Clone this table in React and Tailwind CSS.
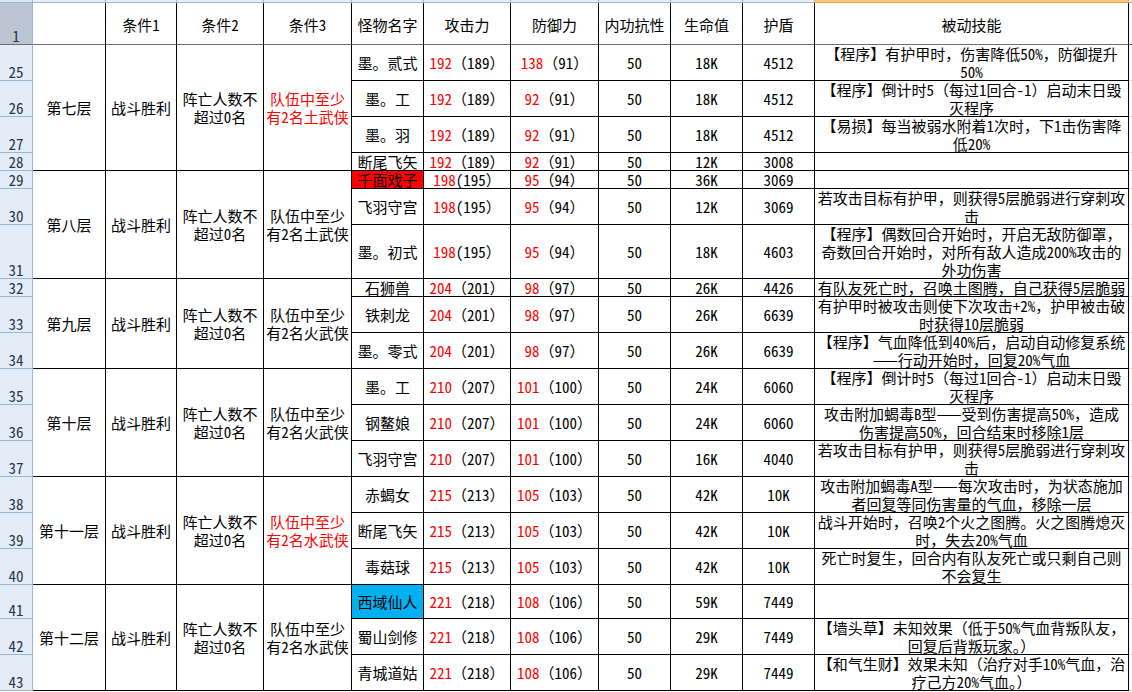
import React from 'react';

const groups = [
  {
    floor: '第七层', team: ['队伍中至少', '有2名土武侠'], red: true,
    rows: [
      { n: 25, name: '墨。贰式', atk: ['192', '（189）'], def: ['138', '（91）'], hp: '18K', shield: '4512', skill: ['【程序】有护甲时，伤害降低50%，防御提升', '50%'] },
      { n: 26, name: '墨。工', atk: ['192', '（189）'], def: ['92', '（91）'], hp: '18K', shield: '4512', skill: ['【程序】倒计时5（每过1回合-1）启动末日毁', '灭程序'] },
      { n: 27, name: '墨。羽', atk: ['192', '（189）'], def: ['92', '（91）'], hp: '18K', shield: '4512', skill: ['【易损】每当被弱水附着1次时，下1击伤害降', '低20%'] },
      { n: 28, name: '断尾飞矢', atk: ['192', '（189）'], def: ['92', '（91）'], hp: '12K', shield: '3008', skill: [] },
    ],
  },
  {
    floor: '第八层', team: ['队伍中至少', '有2名土武侠'],
    rows: [
      { n: 29, name: '千面戏子', bg: 'bg-[#ff0000]', atk: ['198', '(195）'], def: ['95', '（94）'], hp: '36K', shield: '3069', skill: [] },
      { n: 30, name: '飞羽守宫', atk: ['198', '(195）'], def: ['95', '（94）'], hp: '12K', shield: '3069', skill: ['若攻击目标有护甲，则获得5层脆弱进行穿刺攻', '击'] },
      { n: 31, name: '墨。初式', atk: ['198', '(195）'], def: ['95', '（94）'], hp: '18K', shield: '4603', skill: ['【程序】偶数回合开始时，开启无敌防御罩，', '奇数回合开始时，对所有敌人造成200%攻击的', '外功伤害'] },
    ],
  },
  {
    floor: '第九层', team: ['队伍中至少', '有2名火武侠'],
    rows: [
      { n: 32, name: '石狮兽', atk: ['204', '（201）'], def: ['98', '（97）'], hp: '26K', shield: '4426', skill: ['有队友死亡时，召唤土图腾，自己获得5层脆弱'] },
      { n: 33, name: '铁刺龙', atk: ['204', '（201）'], def: ['98', '（97）'], hp: '26K', shield: '6639', skill: ['有护甲时被攻击则使下次攻击+2%，护甲被击破', '时获得10层脆弱'] },
      { n: 34, name: '墨。零式', atk: ['204', '（201）'], def: ['98', '（97）'], hp: '26K', shield: '6639', skill: ['【程序】气血降低到40%后，启动自动修复系统', '——行动开始时，回复20%气血'] },
    ],
  },
  {
    floor: '第十层', team: ['队伍中至少', '有2名火武侠'],
    rows: [
      { n: 35, name: '墨。工', atk: ['210', '（207）'], def: ['101', '（100）'], hp: '24K', shield: '6060', skill: ['【程序】倒计时5（每过1回合-1）启动末日毁', '灭程序'] },
      { n: 36, name: '钢鳌娘', atk: ['210', '（207）'], def: ['101', '（100）'], hp: '24K', shield: '6060', skill: ['攻击附加蝎毒B型——受到伤害提高50%，造成', '伤害提高50%，回合结束时移除1层'] },
      { n: 37, name: '飞羽守宫', atk: ['210', '（207）'], def: ['101', '（100）'], hp: '16K', shield: '4040', skill: ['若攻击目标有护甲，则获得5层脆弱进行穿刺攻', '击'] },
    ],
  },
  {
    floor: '第十一层', team: ['队伍中至少', '有2名水武侠'], red: true,
    rows: [
      { n: 38, name: '赤蝎女', atk: ['215', '（213）'], def: ['105', '（103）'], hp: '42K', shield: '10K', skill: ['攻击附加蝎毒A型——每次攻击时，为状态施加', '者回复等同伤害量的气血，移除一层'] },
      { n: 39, name: '断尾飞矢', atk: ['215', '（213）'], def: ['105', '（103）'], hp: '42K', shield: '10K', skill: ['战斗开始时，召唤2个火之图腾。火之图腾熄灭', '时，失去20%气血'] },
      { n: 40, name: '毒菇球', atk: ['215', '（213）'], def: ['105', '（103）'], hp: '42K', shield: '10K', skill: ['死亡时复生，回合内有队友死亡或只剩自己则', '不会复生'] },
    ],
  },
  {
    floor: '第十二层', team: ['队伍中至少', '有2名水武侠'],
    rows: [
      { n: 41, name: '西域仙人', bg: 'bg-[#00b0f0]', atk: ['221', '（218）'], def: ['108', '（106）'], hp: '59K', shield: '7449', skill: [] },
      { n: 42, name: '蜀山剑修', atk: ['221', '（218）'], def: ['108', '（106）'], hp: '29K', shield: '7449', skill: ['【墙头草】未知效果（低于50%气血背叛队友，', '回复后背叛玩家。）'] },
      { n: 43, name: '青城道姑', atk: ['221', '（218）'], def: ['108', '（106）'], hp: '29K', shield: '7449', skill: ['【和气生财】效果未知（治疗对手10%气血，治', '疗己方20%气血。）'] },
    ],
  },
];

const cell = 'flex items-center justify-center text-center border-r border-b border-black whitespace-nowrap';
const rowHead = 'flex items-end justify-center bg-[#e4ecf7] border-r border-b border-[#9eb6ce] text-[#27384a] leading-[16px]';
const filler = 'border-b border-[#d0d7e5]';

function Lines({ lines }) {
  return (
    <div>
      {lines.map((l, i) => (
        <div key={i}>{l}</div>
      ))}
    </div>
  );
}

export default function App() {
  const items = [];

  // thin column-header strip at the very top
  items.push(<div key="s0" className="bg-[#dce6f2] border-r border-b border-[#9eb6ce]" />);
  for (let i = 1; i <= 10; i++) {
    items.push(<div key={'s' + i} className="bg-[#e8eef7] border-r border-b border-[#9eb6ce]" />);
  }
  items.push(<div key="s11" className="bg-[#f8c77a] border-r border-b border-[#e0a64e]" />);
  items.push(<div key="s12" className="bg-[#e8eef7] border-b border-[#9eb6ce]" />);

  // header row
  const heads = ['', '条件1', '条件2', '条件3', '怪物名字', '攻击力', '防御力', '内功抗性', '生命值', '护盾', '被动技能'];
  items.push(
    <div key="h0" className="flex items-end justify-center bg-[#bcc6d2] border-r border-b border-r-[#9eb6ce] border-b-[#6e6e6e] text-[#27384a] leading-[16px]">1</div>
  );
  heads.forEach((h, i) => {
    items.push(
      <div key={'h' + (i + 1)} className="flex items-center justify-center pt-[3px] border-r border-b border-r-black border-b-[#6e6e6e]">{h}</div>
    );
  });
  items.push(<div key="h12" className="border-b border-[#6e6e6e]" />);

  groups.forEach((g) => {
    const span = g.rows.length === 4 ? 'row-span-4' : 'row-span-3';
    g.rows.forEach((r, idx) => {
      items.push(<div key={'n' + r.n} className={rowHead}>{r.n}</div>);
      if (idx === 0) {
        items.push(<div key={'a' + r.n} className={`${cell} ${span}`}>{g.floor}</div>);
        items.push(<div key={'b' + r.n} className={`${cell} ${span}`}>战斗胜利</div>);
        items.push(
          <div key={'c' + r.n} className={`${cell} ${span}`}>
            <Lines lines={['阵亡人数不', '超过0名']} />
          </div>
        );
        items.push(
          <div key={'d' + r.n} className={`${cell} ${span} ${g.red ? 'text-[#ff0000]' : ''}`}>
            <Lines lines={g.team} />
          </div>
        );
      }
      items.push(<div key={'e' + r.n} className={`${cell} ${r.bg || ''}`}>{r.name}</div>);
      items.push(
        <div key={'f' + r.n} className={cell}>
          <span className="text-[#ff0000]">{r.atk[0]}</span>
          <span>{r.atk[1]}</span>
        </div>
      );
      items.push(
        <div key={'g' + r.n} className={cell}>
          <span className="text-[#ff0000]">{r.def[0]}</span>
          <span>{r.def[1]}</span>
        </div>
      );
      items.push(<div key={'i' + r.n} className={cell}>50</div>);
      items.push(<div key={'j' + r.n} className={cell}>{r.hp}</div>);
      items.push(<div key={'k' + r.n} className={cell}>{r.shield}</div>);
      items.push(
        <div key={'l' + r.n} className={cell}>
          <Lines lines={r.skill} />
        </div>
      );
      items.push(<div key={'m' + r.n} className={filler} />);
    });
  });

  return (
    <div
      className="w-[1132px] h-[692px] overflow-hidden bg-white text-black text-[15px] leading-[18px] grid grid-cols-[33px_73px_71px_87px_88px_72px_87px_88px_72px_72px_72px_314px_1fr] grid-rows-[3px_42px_36px_36px_36px_18px_18px_36px_54px_18px_36px_36px_36px_36px_36px_36px_36px_36px_34px_36px_36px_1fr]"
      style={{ fontFamily: '"Noto Sans Mono CJK SC", "Noto Sans CJK SC", sans-serif' }}
    >
      {items}
    </div>
  );
}
